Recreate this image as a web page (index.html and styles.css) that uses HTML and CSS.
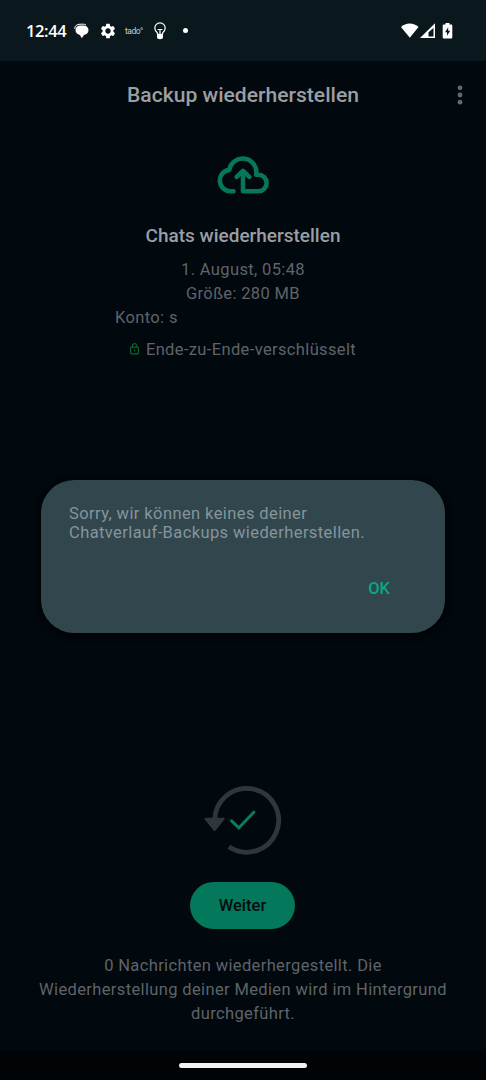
FILE: index.html
```html
<!DOCTYPE html>
<html lang="de">
<head>
  <meta charset="UTF-8">
  <meta name="viewport" content="width=device-width, initial-scale=1.0">
  <title>Backup wiederherstellen</title>
  <link rel="stylesheet" href="styles.css">
</head>
<body>
  <div class="phone">
    <div class="status">
      <span class="clock">12:44</span>
      <svg class="icon-chat" width="15" height="16" viewBox="0 0 15 16">
        <path d="M.7 5.800C.6 2.800 3 1.200 6 1.200h3.200c1 0 1.900.2 2.700.6" fill="none" stroke="#fff" stroke-width="1"/>
        <path d="M6.500 2.500h2.800c3.200 0 5.200 1.900 5.200 4.600 0 2.500-1.500 4.300-4.500 5L7.800 15.200 5.900 12C3.300 11.400 1.500 9.500 1.500 7c0-2.700 1.900-4.500 5-4.500z" fill="#fff"/>
      </svg>
      <svg class="icon-gear" width="18" height="18" viewBox="0 0 24 24">
        <path fill="#fff" d="M19.140 12.940c.04-.3.060-.61.060-.94 0-.32-.02-.64-.07-.94l2.030-1.580c.18-.14.230-.41.120-.61l-1.920-3.320c-.12-.22-.37-.29-.59-.22l-2.390.96c-.5-.38-1.030-.7-1.620-.94l-.36-2.540c-.04-.24-.24-.41-.48-.41h-3.840c-.24 0-.43.170-.47.410l-.36 2.540c-.59.240-1.130.570-1.620.940l-2.390-.96c-.22-.08-.47 0-.59.220L2.740 8.870c-.12.210-.08.470.12.610l2.030 1.580c-.05.300-.09.630-.09.940s.02.640.07.940l-2.030 1.580c-.18.140-.23.410-.12.610l1.920 3.320c.12.220.370.290.590.220l2.390-.96c.5.380 1.030.7 1.620.94l.36 2.540c.05.240.240.410.480.410h3.840c.24 0 .44-.17.470-.41l.36-2.540c.59-.24 1.130-.56 1.620-.94l2.390.96c.22.080.470 0 .59-.22l1.920-3.320c.12-.22.070-.47-.12-.61l-2.010-1.580zM12 15.600c-1.980 0-3.600-1.620-3.600-3.600s1.620-3.600 3.600-3.600 3.600 1.620 3.600 3.600-1.620 3.600-3.600 3.600z"/>
      </svg>
      <span class="tado">tado°</span>
      <svg class="icon-bulb" width="12" height="18" viewBox="0 0 12 18">
        <path d="M3.300 12.300V10.700C1.700 9.500.8 8 .8 6.100a5.200 5.200 0 0 1 10.400 0c0 1.900-.9 3.400-2.500 4.600v1.600" fill="none" stroke="#fff" stroke-width="1.200"/>
        <path d="M3.600 7.500h4.800M6 7.500v5" fill="none" stroke="#fff" stroke-width="1.200"/>
        <path d="M3 11.800h6v3.200c0 1.500-1.200 2.200-3 2.200s-3-.7-3-2.200z" fill="#fff"/>
      </svg>
      <span class="dot"></span>
      <svg class="icon-signal" width="52" height="16" viewBox="0 0 52 16">
        <path d="M0 4C4.500-.8 13-.8 17.500 4L8.800 14.700z" fill="#fff"/>
        <path d="M34 .3V15H19z" fill="#fff"/>
        <path d="M32.500 5v8.500h-5v-4.200z" fill="#0a171c"/>
        <path d="M44.500 0h4v1.500H50c.8 0 1.300.5 1.300 1.200v11.500c0 .8-.5 1.300-1.300 1.300h-7c-.8 0-1.300-.5-1.300-1.300V2.700c0-.7.5-1.200 1.300-1.200h1.500z" fill="#fff"/>
        <path d="M47.200 4.300l-3.200 5h2v3.500l3.200-5h-2z" fill="#0a171c"/>
      </svg>
    </div>

    <div class="appbar">
      <h1 class="title">Backup wiederherstellen</h1>
      <svg class="more" width="6" height="20" viewBox="0 0 6 20">
        <circle cx="3" cy="2.800" r="2.400"/>
        <circle cx="3" cy="10" r="2.400"/>
        <circle cx="3" cy="17.200" r="2.400"/>
      </svg>
    </div>

    <div class="backup">
      <svg class="cloud" width="54" height="40" viewBox="216 155 54 40">
        <path d="M233.500 191.200H230A10.700 10.700 0 0 1 229.200 169.900A13.700 13.700 0 0 1 256.200 174.700H258.400a8.250 8.250 0 0 1 0 16.500H243V172"/>
        <path d="M236.700 176.800l6.300-6 6.300 6"/>
      </svg>
      <h2 class="subtitle">Chats wiederherstellen</h2>
      <p class="info">1. August, 05:48</p>
      <p class="info">Größe: 280 MB</p>
      <p class="info account">Konto: s</p>
      <p class="info encrypted">
        <svg class="lock" width="9" height="12" viewBox="0 0 9 12">
          <rect x=".6" y="4.100" width="7.800" height="6.700" rx=".8"/>
          <path d="M2.500 4V2.600a2 2 0 0 1 4 0V4M4.500 6.600v1.700"/>
        </svg>
        <span>Ende-zu-Ende-verschlüsselt</span>
      </p>
    </div>

    <div class="dialog">
      <p class="message">Sorry, wir können keines deiner<br>Chatverlauf-Backups wiederherstellen.</p>
      <button class="ok">OK</button>
    </div>

    <div class="bottom">
      <svg class="restore" width="78" height="70" viewBox="204 785 78 70">
        <path class="ring" d="M214.800 821A31.900 31.900 0 1 1 228.900 846.800"/>
        <path class="arrow" d="M205.500 818.800h18.200l-9.100 11.400z"/>
        <path class="check" d="M231.600 820.800l7.200 7 15-15.600"/>
      </svg>
      <button class="next">Weiter</button>
      <p class="info">0 Nachrichten wiederhergestellt. Die<br>Wiederherstellung deiner Medien wird im Hintergrund<br>durchgeführt.</p>
    </div>

    <div class="navbar">
      <span class="handle"></span>
    </div>
  </div>
</body>
</html>
```
FILE: styles.css
```css
*{
  box-sizing: border-box;
}

body{
  margin: 0;
  background-color: #01080e;
  font-family: Roboto, "Liberation Sans", sans-serif;
}

h1, h2, p{
  margin: 0;
  font-weight: 400;
}

button{
  border: 0;
  padding: 0;
  font-family: inherit;
}

svg{
  display: block;
  flex: none;
}

.phone{
  display: flex;
  flex-direction: column;
  width: 486px;
  height: 1080px;
  overflow: hidden;
}

/* status bar */
.status{
  display: flex;
  align-items: center;
  height: 61px;
  padding: 0 33px 0 26px;
  background-color: #0a171c;
  color: #fff;
}

.clock{
  width: 41px;
  font-family: "Open Sans", sans-serif;
  font-size: 16.5px;
  font-weight: 600;
  letter-spacing: -0.4px;
  line-height: 20px;
}

.icon-chat{
  margin-left: 7px;
}

.icon-gear{
  margin-left: 10px;
}

.tado{
  width: 18px;
  margin-left: 8px;
  font-size: 8.5px;
  letter-spacing: -0.5px;
  line-height: 12px;
  color: #c9ced0;
}

.icon-bulb{
  margin-left: 11px;
}

.dot{
  width: 5px;
  height: 5px;
  margin-left: 17px;
  border-radius: 50%;
  background-color: #fff;
}

.icon-signal{
  margin-left: auto;
}

/* app bar */
.appbar{
  display: grid;
  grid-template-columns: 1fr auto 1fr;
  align-items: center;
  height: 67px;
  padding: 0 23px;
}

.title{
  grid-column: 2;
  font-size: 21.1px;
  font-weight: 500;
  color: #9c9fa2;
}

.more{
  justify-self: end;
  fill: #65696e;
}

/* backup details */
.backup{
  display: flex;
  flex-direction: column;
  align-items: center;
  height: 352px;
  padding-top: 27px;
}

.cloud{
  fill: none;
  stroke: #06775b;
  stroke-width: 4.6;
  stroke-linecap: round;
  stroke-linejoin: round;
}

.subtitle{
  margin: 28px 0 9px;
  font-size: 19px;
  font-weight: 500;
  line-height: 26px;
  color: #9c9fa2;
}

.info{
  font-size: 16.5px;
  letter-spacing: 0.36px;
  line-height: 24px;
  text-align: center;
  color: #5f6469;
}

.account{
  width: 256px;
  text-align: left;
}

.encrypted{
  display: flex;
  gap: 7px;
  margin-top: 8px;
}

.lock{
  margin-top: 5px;
  fill: none;
  stroke: #07682f;
  stroke-width: 1.2;
}

/* dialog */
.dialog{
  display: flex;
  flex-direction: column;
  width: 404px;
  height: 153px;
  margin: 0 41px;
  padding: 24px 55px 0 28px;
  border-radius: 33px;
  background-color: #32464e;
  box-shadow: 0 2px 8px #000;
}

.message{
  font-size: 16.5px;
  letter-spacing: 0.4px;
  line-height: 19px;
  white-space: nowrap;
  color: #84959b;
}

.ok{
  align-self: flex-end;
  margin-top: 35px;
  background: none;
  font-size: 16.5px;
  font-weight: 500;
  line-height: 24px;
  color: #05a884;
}

/* progress and next button */
.bottom{
  display: flex;
  flex: 1;
  flex-direction: column;
  align-items: center;
  padding-top: 152px;
}

.restore{
  fill: none;
}

.ring{
  stroke: #30363e;
  stroke-width: 4.8;
}

.arrow{
  fill: #30363e;
  stroke: #30363e;
  stroke-width: 2;
  stroke-linejoin: round;
}

.check{
  stroke: #0b7b5c;
  stroke-width: 3;
  stroke-linecap: round;
}

.next{
  width: 105px;
  height: 47px;
  margin: 27px 1px 25px 0;
  border-radius: 24px;
  background-color: #04785b;
  font-size: 16.5px;
  font-weight: 500;
  color: #020c10;
}

/* gesture bar */
.navbar{
  display: flex;
  justify-content: center;
  height: 29px;
  padding-top: 12px;
  background-color: #010406;
}

.handle{
  width: 128px;
  height: 5px;
  border-radius: 3px;
  background-color: #f1f3f3;
}
```
